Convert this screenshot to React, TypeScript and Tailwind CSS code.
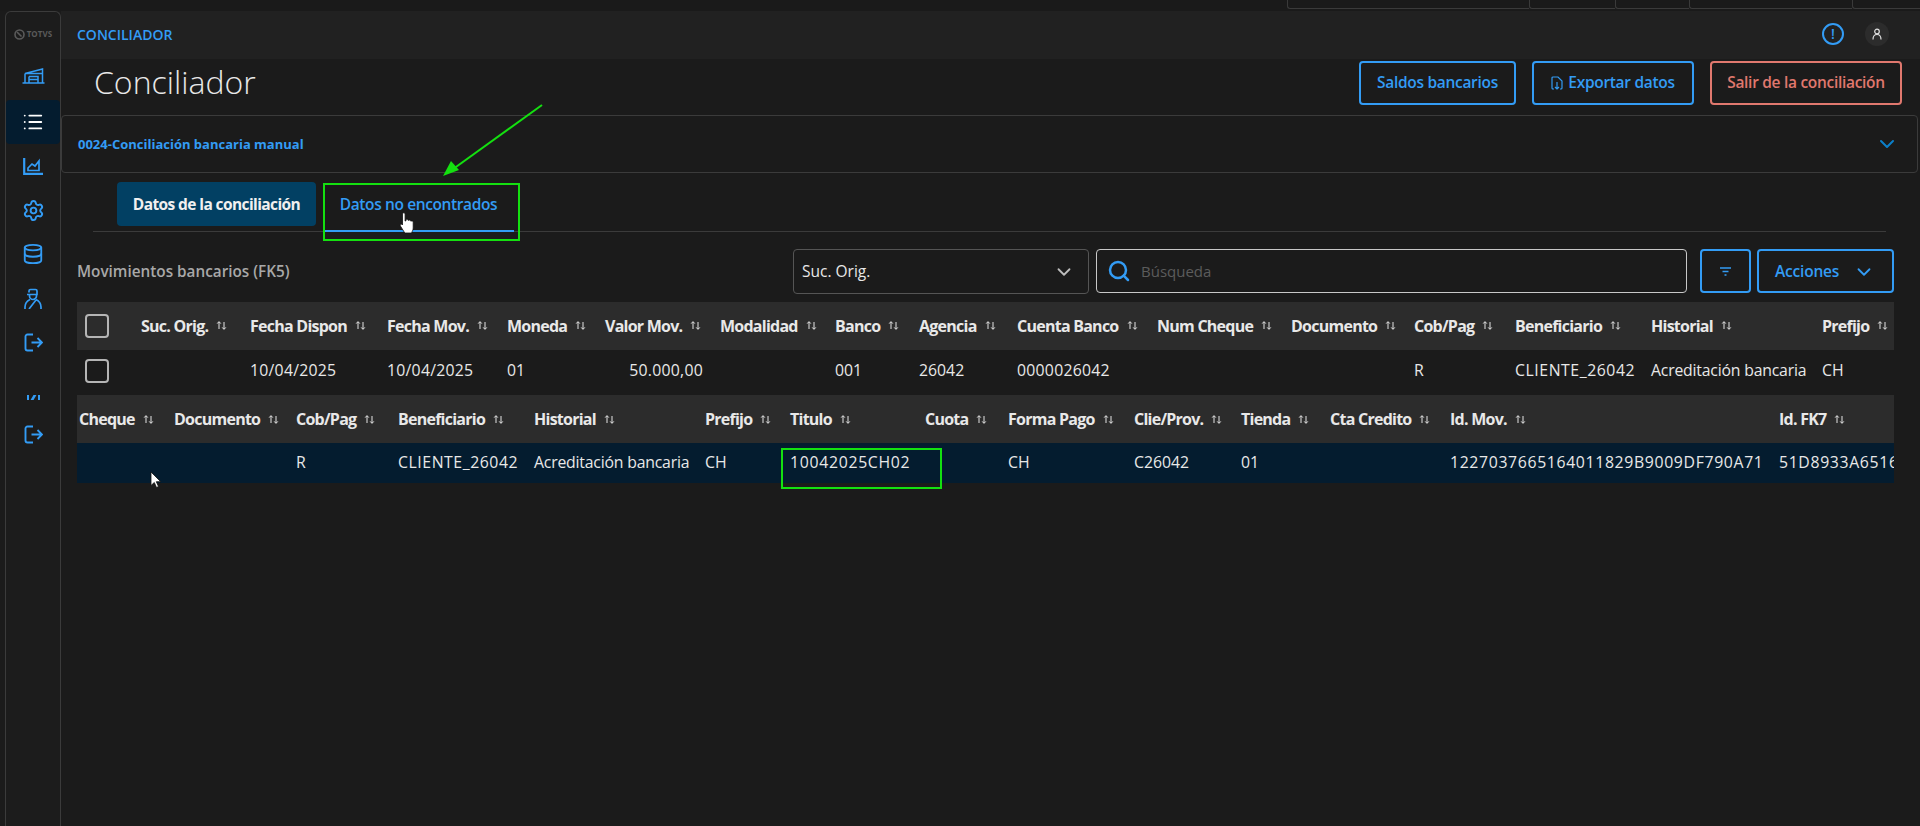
import { ChevronDown, Database, List, Search, Settings } from "lucide-react";

const TOP_COLS = [
  { label: "" },
  { label: "Suc. Orig." },
  { label: "Fecha Dispon", value: "10/04/2025", track: "tracking-[0.25px]" },
  { label: "Fecha Mov.", value: "10/04/2025", track: "tracking-[0.25px]" },
  { label: "Moneda", value: "01" },
  { label: "Valor Mov." },
  { label: "Modalidad" },
  { label: "Banco", value: "001" },
  { label: "Agencia", value: "26042" },
  { label: "Cuenta Banco", value: "0000026042", track: "tracking-[0.25px]" },
  { label: "Num Cheque" },
  { label: "Documento" },
  { label: "Cob/Pag", value: "R" },
  { label: "Beneficiario", value: "CLIENTE_26042", track: "tracking-[0.56px]" },
  { label: "Historial", value: "Acreditación bancaria", track: "tracking-[-0.2px]" },
  { label: "Prefijo", value: "CH" },
];

const BOTTOM_COLS = [
  { label: "Cheque" },
  { label: "Documento" },
  { label: "Cob/Pag", value: "R" },
  { label: "Beneficiario", value: "CLIENTE_26042", track: "tracking-[0.56px]" },
  { label: "Historial", value: "Acreditación bancaria", track: "tracking-[-0.2px]" },
  { label: "Prefijo", value: "CH" },
  { label: "Titulo", value: "10042025CH02", track: "tracking-[0.7px]" },
  { label: "Cuota" },
  { label: "Forma Pago", value: "CH" },
  { label: "Clie/Prov.", value: "C26042" },
  { label: "Tienda", value: "01" },
  { label: "Cta Credito" },
  { label: "Id. Mov.", value: "1227037665164011829B9009DF790A71", track: "tracking-[0.65px]" },
  { label: "Id. FK7", value: "51D8933A6516C40B", track: "tracking-[0.65px]" },
];

function SortIcon() {
  return (
    <svg width="11" height="11" viewBox="0 0 11 11" fill="none" stroke="#e5e5e5" strokeWidth="1" className="shrink-0">
      <path d="M3 9V2M1.2 3.6 3 1.6l1.8 2M8 2v7M6.2 7.4 8 9.4l1.8-2" />
    </svg>
  );
}

function HeaderCell({ label }: { label: string }) {
  return (
    <div className="flex items-center gap-[8px] whitespace-nowrap text-[16px] font-bold tracking-[-0.75px] text-[#e8e8e8]">
      {label}
      {label && <SortIcon />}
    </div>
  );
}

function WarehouseIcon() {
  return (
    <svg width="23" height="16" viewBox="0 0 22 16" fill="none" stroke="#339cf5" strokeWidth="1.5">
      <path d="M2.5 5.5 20 1v13.5M2.5 5.5v9M0 15h22M2.5 5.5H20M6.5 8.5h9v6M6.5 8.5v6M6.5 11.5h9" />
    </svg>
  );
}

function ChartIcon() {
  return (
    <svg width="20" height="17" viewBox="0 0 20 17" fill="none" stroke="#339cf5">
      <path d="M1.2 0v15.8H20" strokeWidth="2.2" />
      <path d="M5 12.5V10l4-4 3 2 4-5v9.5z" strokeWidth="1.7" />
    </svg>
  );
}

function AgentIcon() {
  return (
    <svg width="18" height="21" viewBox="0 0 18 21" fill="none" stroke="#339cf5" strokeWidth="1.7">
      <path d="M5 4.5V3a1.5 1.5 0 0 1 1.5-1.5h5A1.5 1.5 0 0 1 13 3v3.5H3M5.5 6.5V8a3.5 3.5 0 0 0 7 0V6.5" />
      <path d="M1 21v-2c0-4 2-6 5-7.5M17 21v-2c0-4-2-6-5-7.5M5 21l7-9" />
    </svg>
  );
}

function ExitIcon() {
  return (
    <svg width="19" height="19" viewBox="0 0 19 19" fill="none" stroke="#339cf5" strokeWidth="1.9">
      <path d="M9 1.5H3.5a2 2 0 0 0-2 2v12a2 2 0 0 0 2 2H9M7.5 9.5H18M13.5 5l4.5 4.5-4.5 4.5" />
    </svg>
  );
}

function Checkbox() {
  return <div className="h-[24px] w-[24px] rounded-[4px] border-2 border-[#b5b5b5]" />;
}

function Sidebar() {
  const iconRow = "flex h-[44px] w-full items-center justify-center";
  return (
    <aside className="flex w-[56px] shrink-0 flex-col items-center rounded-t-[6px] border-x border-t border-[#3b3b3b] bg-[#1c1c1c]">
      <div className="flex h-[42px] w-full items-center justify-center gap-[2px] pt-[2px] text-[#5a5a5a]">
        <svg width="11" height="11" viewBox="0 0 11 11" fill="none" stroke="#5a5a5a" strokeWidth="1.6">
          <circle cx="5.5" cy="5.5" r="4.5" />
          <path d="M3 3l4.5 4.5" />
        </svg>
        <span className="text-[8px] font-bold tracking-[0.1px]">TOTVS</span>
      </div>
      <div className="flex h-[46px] w-full items-center justify-center pb-[2px]">
        <WarehouseIcon />
      </div>
      <div className={`${iconRow} rounded-[4px] bg-[#041c2f]`}>
        <List size={22} color="#ffffff" strokeWidth={2} />
      </div>
      <div className={iconRow}>
        <ChartIcon />
      </div>
      <div className={iconRow}>
        <Settings size={23} color="#339cf5" strokeWidth={2} />
      </div>
      <div className={iconRow}>
        <Database size={22} color="#339cf5" strokeWidth={2} />
      </div>
      <div className={iconRow}>
        <AgentIcon />
      </div>
      <div className={iconRow}>
        <ExitIcon />
      </div>
      <div className="mt-[31px] flex h-[5px] w-full items-start justify-center gap-[3px]">
        <span className="h-[5px] w-[2px] bg-[#339cf5]" />
        <span className="h-[5px] w-[3px] skew-x-[-30deg] bg-[#339cf5]" />
        <span className="h-[5px] w-[2px] bg-[#339cf5]" />
      </div>
      <div className="mt-[12px] flex h-[44px] w-full items-center justify-center">
        <ExitIcon />
      </div>
    </aside>
  );
}

function Overlays() {
  return (
    <>
      {/* green annotations from the screenshot */}
      <svg width="120" height="90" viewBox="0 0 120 90" className="absolute left-[435px] top-[100px]" fill="none">
        <path d="M107 5 14 72" stroke="#14e010" strokeWidth="2" />
        <path d="M8 76 24 70 16 61z" fill="#14e010" />
      </svg>
      <div className="absolute left-[323px] top-[183px] h-[58px] w-[197px] border-2 border-[#14e010]" />
      <div className="absolute left-[781px] top-[448px] h-[41px] w-[161px] border-2 border-[#14e010]" />
      {/* hand cursor */}
      <svg width="16" height="22" viewBox="0 0 16 22" className="absolute left-[399px] top-[212px]">
        <path
          d="M3.5 2a1.3 1.3 0 0 1 2.6 0v7l.9-.2V7.5c1-.6 2-.3 2 .8l.9-.1c.9-.3 1.7 0 1.8.9l.9-.1c1-.1 1.6.4 1.6 1.4V16c0 2-1 3-1.6 5H5.8L1.4 14c-.8-1.3.5-2.5 1.6-1.6l.5.6z"
          fill="#ffffff"
          stroke="#111111"
          strokeWidth="0.8"
        />
      </svg>
      {/* arrow cursor */}
      <svg width="12" height="18" viewBox="0 0 12 18" className="absolute left-[150px] top-[471px]">
        <path d="M1 1v13.5l3.3-3 2.2 5 2-1-2.2-4.8h4.4z" fill="#ffffff" stroke="#111111" strokeWidth="0.8" />
      </svg>
    </>
  );
}

export default function App() {
  return (
    <div className="relative h-[826px] w-[1920px] overflow-hidden bg-[#1b1b1b] font-['Open_Sans',sans-serif] text-[#e8e8e8]">
      {/* browser strip at the very top */}
      <div className="flex h-[11px] bg-[#1a1a1a] pl-[1287px]">
        <div className="h-[9px] w-[242px] rounded-bl-[3px] border-b border-l border-[#3a3a3a]" />
        <div className="h-[9px] w-[86px] rounded-bl-[3px] border-b border-l border-[#3a3a3a]" />
        <div className="h-[9px] w-[74px] rounded-bl-[3px] border-b border-l border-[#3a3a3a]" />
        <div className="h-[9px] w-[163px] rounded-bl-[3px] border-b border-l border-[#3a3a3a]" />
        <div className="h-[9px] w-[68px] rounded-bl-[3px] border-b border-l border-[#3a3a3a]" />
      </div>

      <div className="flex h-[815px] pl-[5px]">
        <Sidebar />

        <main className="min-w-0 flex-1">
          {/* app bar */}
          <div className="flex h-[48px] items-center justify-between bg-[#212121] pb-[2px] pl-[16px] pr-[31px]">
            <span className="text-[14px] font-semibold text-[#339cf5]">CONCILIADOR</span>
            <div className="flex items-center gap-[21px]">
              <div className="flex h-[22px] w-[22px] items-center justify-center rounded-full border-2 border-[#339cf5] text-[14px] font-semibold leading-none text-[#339cf5]">
                !
              </div>
              <div className="flex h-[24px] w-[24px] items-center justify-center rounded-full bg-[#2c2c2c]">
                <svg width="12" height="12" viewBox="0 0 12 12" fill="none" stroke="#e0e0e0" strokeWidth="1.2">
                  <circle cx="6" cy="3.5" r="2.3" />
                  <path d="M2 11.5c0-3 1.6-5 4-5s4 2 4 5" />
                </svg>
              </div>
            </div>
          </div>

          {/* title and actions */}
          <div className="mt-[2px] flex h-[44px] items-center justify-between pl-[33px] pr-[18px]">
            <h1 className="pb-[2px] text-[32px] font-light text-[#e8e8e8]">Conciliador</h1>
            <div className="flex gap-[16px] text-[15.5px] font-semibold tracking-[-0.3px]">
              <button className="h-[44px] w-[157px] rounded-[4px] border-2 border-[#339cf5] text-[#339cf5]">
                Saldos bancarios
              </button>
              <button className="flex h-[44px] w-[162px] items-center justify-center gap-[5px] rounded-[4px] border-2 border-[#339cf5] text-[#339cf5]">
                <svg width="12" height="14" viewBox="0 0 12 14" fill="none" stroke="#339cf5" strokeWidth="1.2">
                  <path d="M3 13H2a1 1 0 0 1-1-1V2a1 1 0 0 1 1-1h5l4 4v7a1 1 0 0 1-1 1H9M6 6v7M4 11l2 2 2-2" />
                </svg>
                Exportar datos
              </button>
              <button className="h-[44px] w-[192px] rounded-[4px] border-2 border-[#e0786e] text-[#e0786e]">
                Salir de la conciliación
              </button>
            </div>
          </div>

          {/* collapsed section */}
          <div className="mr-[2px] mt-[10px] flex h-[58px] items-center justify-between rounded-[4px] border border-[#3b3b3b] pl-[16px] pr-[18px]">
            <span className="pt-[1px] text-[13px] font-bold text-[#339cf5]">0024-Conciliación bancaria manual</span>
            <ChevronDown size={24} color="#0b7fc9" strokeWidth={2} />
          </div>

          {/* tabs */}
          <div className="ml-[32px] mr-[34px] mt-[9px] flex h-[50px] gap-[9px] border-b border-[#3b3b3b] pl-[24px]">
            <div className="flex h-[44px] w-[199px] items-center justify-center rounded-[4px] bg-[#024063] pt-[1px] text-[15.5px] font-bold tracking-[-0.6px] text-[#f0f0f0]">
              Datos de la conciliación
            </div>
            <div className="flex h-[50px] w-[189px] justify-center border-b-2 border-[#339cf5] pr-[2px] pt-[11px] text-[15.5px] font-semibold tracking-[-0.38px] text-[#339cf5]">
              Datos no encontrados
            </div>
          </div>

          {/* toolbar */}
          <div className="ml-[16px] mr-[26px] mt-[17px] flex h-[44px] items-center">
            <span className="flex-1 text-[15.3px] font-semibold text-[#a8a8a8]">Movimientos bancarios (FK5)</span>
            <div className="flex h-[45px] w-[296px] items-center justify-between rounded-[4px] border border-[#555555] pl-[8px] pr-[13px] pt-[1px] text-[15.5px] text-[#e8e8e8]">
              Suc. Orig.
              <ChevronDown size={22} color="#bdbdbd" strokeWidth={2} />
            </div>
            <div className="ml-[7px] flex h-[44px] w-[591px] items-center gap-[10px] rounded-[4px] border border-[#c8c8c8] pl-[10px] text-[15px] text-[#5c5c5c]">
              <Search size={24} color="#339cf5" strokeWidth={2.5} />
              Búsqueda
            </div>
            <div className="ml-[13px] flex h-[44px] w-[51px] items-center justify-center rounded-[4px] border-2 border-[#339cf5]">
              <svg width="11" height="9" viewBox="0 0 11 9" fill="none" stroke="#339cf5" strokeWidth="1.6">
                <path d="M0 1h11M2.5 4.5h6M4.5 8h2" />
              </svg>
            </div>
            <div className="ml-[6px] flex h-[44px] w-[137px] items-center gap-[14px] rounded-[4px] border-2 border-[#339cf5] pl-[16px] pt-[1px] text-[15.5px] font-semibold tracking-[-0.2px] text-[#339cf5]">
              Acciones
              <ChevronDown size={22} color="#339cf5" strokeWidth={2} />
            </div>
          </div>

          {/* tables */}
          <div className="ml-[16px] mt-[9px] w-[1817px] overflow-hidden text-[15.8px]">
            <div className="grid h-[48px] grid-cols-[64px_109px_137px_120px_98px_115px_115px_84px_98px_140px_134px_123px_101px_136px_171px_80px] items-center bg-[#2c2c2c] pb-[1px]">
              {TOP_COLS.map((col, i) => (
                <div key={i} className={i === 0 ? "pl-[8px]" : ""}>
                  {i === 0 ? <Checkbox /> : <HeaderCell label={col.label} />}
                </div>
              ))}
            </div>
            <div className="grid h-[45px] grid-cols-[64px_109px_137px_120px_98px_115px_115px_84px_98px_140px_134px_123px_101px_136px_171px_80px] items-center bg-[#1b1b1b] pb-[3px]">
              {TOP_COLS.map((col, i) => (
                <div key={i} className={i === 0 ? "pl-[8px]" : `whitespace-nowrap ${col.track ?? ""}`}>
                  {i === 0 && <Checkbox />}
                  {col.label === "Valor Mov." && <div className="w-[98px] text-right tracking-[0.25px]">50.000,00</div>}
                  {col.value}
                </div>
              ))}
            </div>
            <div className="grid h-[48px] grid-cols-[95px_122px_102px_136px_171px_85px_135px_83px_126px_107px_89px_120px_329px_120px] items-center bg-[#2c2c2c] pl-[2px]">
              {BOTTOM_COLS.map((col) => (
                <HeaderCell key={col.label} label={col.label} />
              ))}
            </div>
            <div className="grid h-[40px] grid-cols-[95px_122px_102px_136px_171px_85px_135px_83px_126px_107px_89px_120px_329px_120px] items-center overflow-hidden bg-[#041c2f] pl-[2px]">
              {BOTTOM_COLS.map((col) => (
                <div key={col.label} className={`whitespace-nowrap ${col.track ?? ""}`}>
                  {col.value}
                </div>
              ))}
            </div>
          </div>
        </main>
      </div>

      <Overlays />
    </div>
  );
}
